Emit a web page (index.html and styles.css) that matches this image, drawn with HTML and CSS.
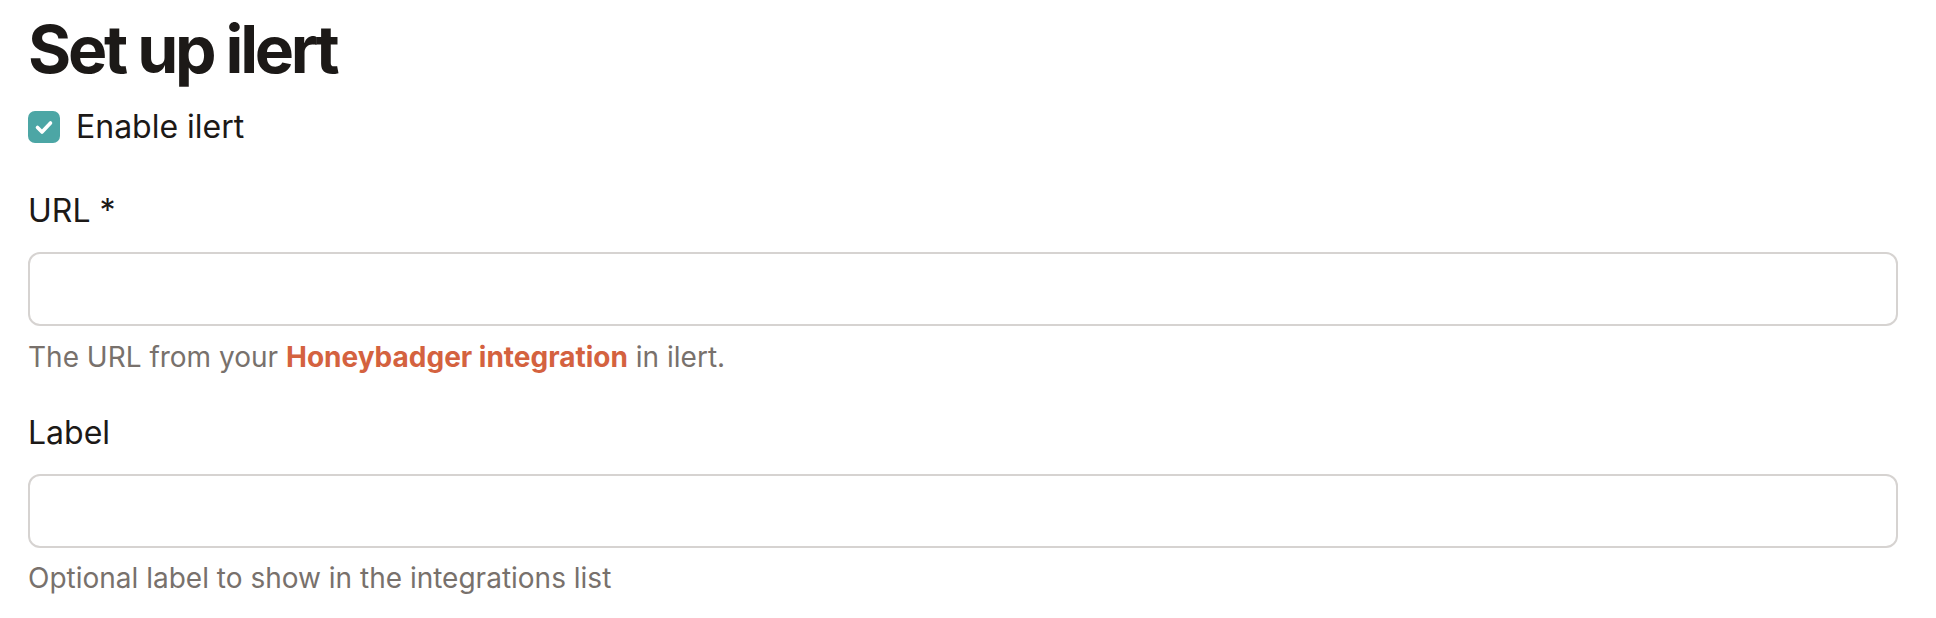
FILE: index.html
```html
<!DOCTYPE html>
<html lang="en">
<head>
<meta charset="utf-8">
<title>Set up ilert</title>
<link rel="stylesheet" href="styles.css">
</head>
<body>
<main class="page">
  <h1 class="title">Set up ilert</h1>
  <label class="check-row">
    <span class="checkbox">
      <svg viewBox="0 0 32 32" width="32" height="32" aria-hidden="true">
        <path d="M9.5 16.5 L14 21 L22.5 12" fill="none" stroke="#fff" stroke-width="3.6" stroke-linecap="round" stroke-linejoin="round"/>
      </svg>
    </span>
    <span class="check-text">Enable ilert</span>
  </label>

  <div class="field field-first">
    <label class="field-label" for="url">URL *</label>
    <input class="field-input" id="url" type="text">
    <p class="field-help">The URL from your <a class="help-link" href="#">Honeybadger integration</a> in ilert.</p>
  </div>

  <div class="field">
    <label class="field-label" for="label">Label</label>
    <input class="field-input" id="label" type="text">
    <p class="field-help field-help-last">Optional label to show in the integrations list</p>
  </div>
</main>
</body>
</html>
```
FILE: styles.css
```css
html, body {
  margin: 0;
  padding: 0;
  background: #ffffff;
}

body {
  font-family: Inter, "Noto Sans", sans-serif;
  color: #1c1917;
}

.page {
  padding: 9px 38px 0 28px;
  display: flex;
  flex-direction: column;
}

.title {
  margin: 0;
  font-size: 66px;
  line-height: 80px;
  font-weight: 700;
  letter-spacing: -0.05em;
  color: #1c1917;
}

.check-row {
  margin-top: 22px;
  display: flex;
  align-items: center;
  gap: 16px;
  height: 32px;
}

.checkbox {
  width: 32px;
  height: 32px;
  border-radius: 7px;
  background: #4ca6a5;
  display: flex;
  flex: none;
}

.check-text {
  font-size: 32px;
  line-height: 32px;
  color: #1c1917;
}

.field {
  display: flex;
  flex-direction: column;
  margin-top: 36px;
}

.field-first {
  margin-top: 48px;
}

.field-label {
  font-size: 32px;
  line-height: 40px;
  color: #1c1917;
}

.field-input {
  margin-top: 21px;
  height: 74px;
  box-sizing: border-box;
  border: 2px solid #d6d3d1;
  border-radius: 12px;
  background: #fff;
  font: inherit;
  font-size: 28px;
  padding: 0 20px;
  outline: none;
}

.field-help {
  margin: 11px 0 0;
  font-size: 28px;
  line-height: 40px;
  color: #78716c;
}

.field-help-last {
  margin-top: 10px;
}

.help-link {
  color: #d4623f;
  font-weight: 700;
  text-decoration: none;
}
```
